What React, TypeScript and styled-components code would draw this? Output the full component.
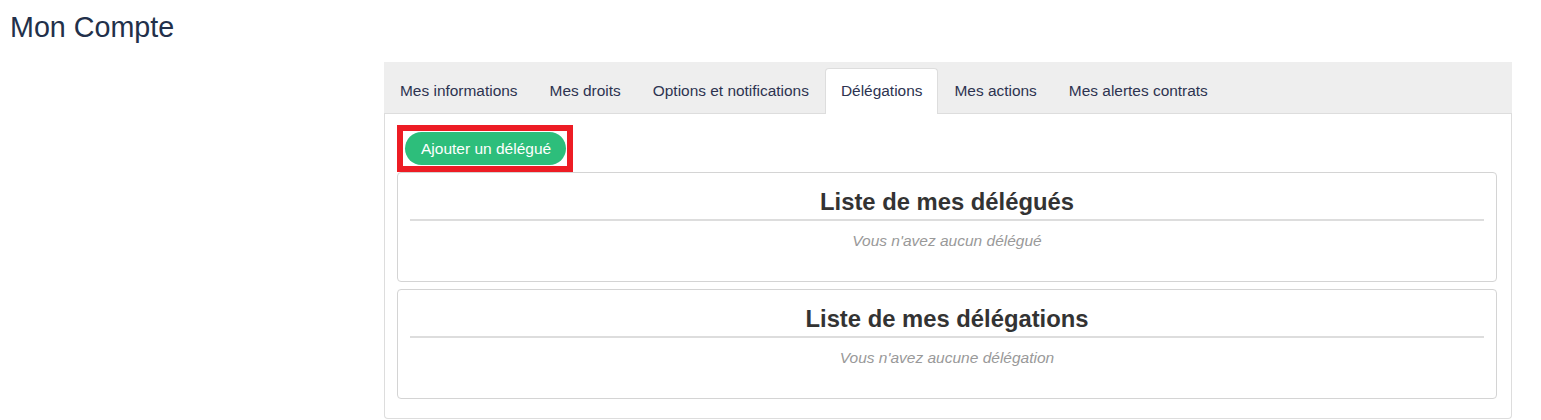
import React from "react";
import styled, { createGlobalStyle } from "styled-components";

const tabs = [
  "Mes informations",
  "Mes droits",
  "Options et notifications",
  "Délégations",
  "Mes actions",
  "Mes alertes contrats",
];

const lists = [
  { title: "Liste de mes délégués", empty: "Vous n'avez aucun délégué" },
  { title: "Liste de mes délégations", empty: "Vous n'avez aucune délégation" },
];

export default function App() {
  return (
    <>
      <GlobalStyle />
      <Page>
        <Title>Mon Compte</Title>
        <Main>
          <TabBar>
            {tabs.map((t) => (
              <Tab key={t} $active={t === "Délégations"}>
                {t}
              </Tab>
            ))}
          </TabBar>
          <Panel>
            <Highlight>
              <AddButton>Ajouter un délégué</AddButton>
            </Highlight>
            <Cards>
              {lists.map((l) => (
                <Card key={l.title}>
                  <CardTitle>{l.title}</CardTitle>
                  <Rule />
                  <Empty>{l.empty}</Empty>
                </Card>
              ))}
            </Cards>
          </Panel>
        </Main>
      </Page>
    </>
  );
}

const GlobalStyle = createGlobalStyle`
  body {
    margin: 0;
    background: #fff;
    font-family: "Liberation Sans", Arial, sans-serif;
  }
`;

const Page = styled.div`
  padding: 0 10px;
`;

const Title = styled.h1`
  margin: 11px 0 19px;
  font-size: 28.7px;
  font-weight: 400;
  line-height: 32px;
  color: #22304a;
`;

const Main = styled.div`
  margin-left: 374px;
  width: 1128px;
`;

const TabBar = styled.div`
  display: flex;
  padding-top: 6px;
  background: #eeeeee;
  border-bottom: 1px solid #dddddd;
`;

const Tab = styled.div<{ $active?: boolean }>`
  position: relative;
  margin-bottom: -1px;
  padding: 12px 15px 13px;
  font-size: 15.45px;
  line-height: 20px;
  color: #2d3350;
  white-space: nowrap;
  border: 1px solid ${(p) => (p.$active ? "#dddddd" : "transparent")};
  border-bottom: none;
  border-radius: 4px 4px 0 0;
  background: ${(p) => (p.$active ? "#ffffff" : "transparent")};
`;

const Panel = styled.div`
  padding: 11px 14px 19px 12px;
  border: 1px solid #dddddd;
  border-top: none;
  border-radius: 0 0 4px 4px;
`;

const Highlight = styled.div`
  display: flex;
  width: fit-content;
  padding: 1px 1px 1px 2px;
  border: 6px solid #ed1c24;
`;

const AddButton = styled.button`
  height: 33px;
  padding: 0 15px 0 16px;
  border: none;
  border-radius: 17px;
  background: #2dbe7b;
  color: #ffffff;
  font-family: "Liberation Sans", Arial, sans-serif;
  font-size: 15.5px;
  line-height: 33px;
  cursor: pointer;
`;

const Cards = styled.div`
  display: flex;
  flex-direction: column;
  gap: 7px;
`;

const Card = styled.div`
  padding: 0 12px 29px;
  border: 1px solid #d4d4d4;
  border-radius: 4px;
`;

const CardTitle = styled.h3`
  margin: 16px 0 4px;
  font-size: 23.8px;
  font-weight: 700;
  line-height: 26px;
  text-align: center;
  color: #333333;
`;

const Rule = styled.hr`
  margin: 0;
  border: none;
  border-top: 2px solid #dddddd;
`;

const Empty = styled.p`
  margin: 9px 0 0;
  font-size: 15.5px;
  font-style: italic;
  line-height: 22px;
  text-align: center;
  color: #999999;
`;
